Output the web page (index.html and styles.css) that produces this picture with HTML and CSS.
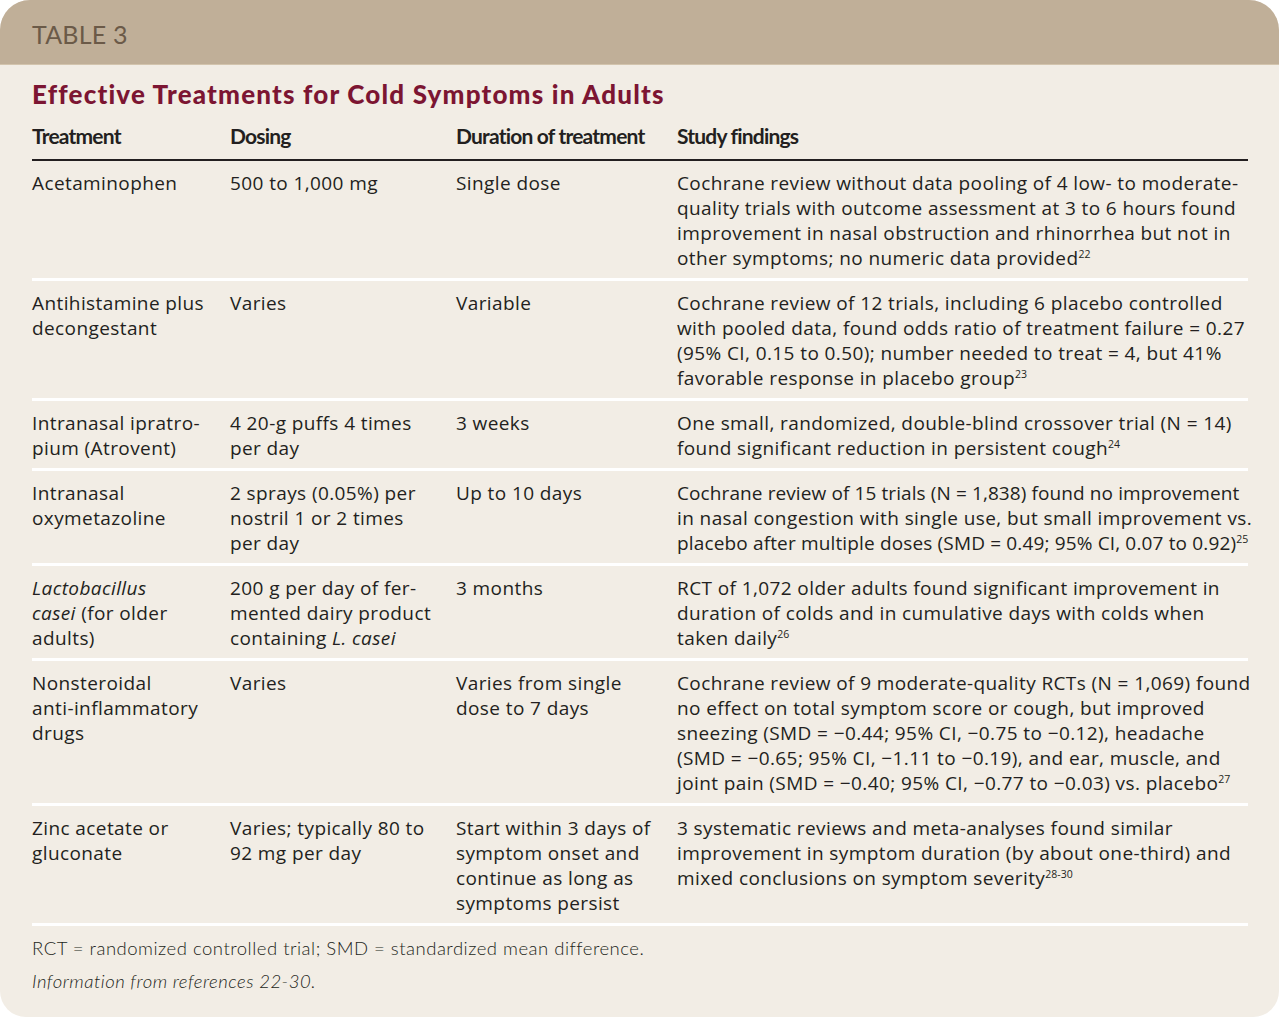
FILE: index.html
```html
<!DOCTYPE html>
<html>
<head>
<meta charset="utf-8">
<link rel="stylesheet" href="styles.css">
</head>
<body>
<div class="card">
  <div class="bar">TABLE 3</div>
  <div class="body">
    <h1 class="title">Effective Treatments for Cold Symptoms in Adults</h1>
    <table class="tbl">
      <colgroup>
        <col class="c1"><col class="c2"><col class="c3"><col class="c4">
      </colgroup>
      <thead>
        <tr><th>Treatment</th><th>Dosing</th><th>Duration of treatment</th><th>Study findings</th></tr>
      </thead>
      <tbody>
        <tr>
          <td>Acetaminophen</td>
          <td>500 to 1,000 mg</td>
          <td>Single dose</td>
          <td>Cochrane review without data pooling of 4 low- to moderate-<br>quality trials with outcome assessment at 3 to 6 hours found<br>improvement in nasal obstruction and rhinorrhea but not in<br>other symptoms; no numeric data provided<sup>22</sup></td>
        </tr>
        <tr>
          <td>Antihistamine plus<br>decongestant</td>
          <td>Varies</td>
          <td>Variable</td>
          <td>Cochrane review of 12 trials, including 6 placebo controlled<br>with pooled data, found odds ratio of treatment failure = 0.27<br>(95% CI, 0.15 to 0.50); number needed to treat = 4, but 41%<br>favorable response in placebo group<sup>23</sup></td>
        </tr>
        <tr>
          <td>Intranasal ipratro-<br>pium (Atrovent)</td>
          <td>4 20-g puffs 4 times<br>per day</td>
          <td>3 weeks</td>
          <td>One small, randomized, double-blind crossover trial (N = 14)<br>found significant reduction in persistent cough<sup>24</sup></td>
        </tr>
        <tr>
          <td>Intranasal<br>oxymetazoline</td>
          <td>2 sprays (0.05%) per<br>nostril 1 or 2 times<br>per day</td>
          <td>Up to 10 days</td>
          <td><span class="tighter">Cochrane review of 15 trials (N = 1,838) found no improvement</span><br>in nasal congestion with single use, but small improvement vs.<br><span class="tight">placebo after multiple doses (SMD = 0.49; 95% CI, 0.07 to 0.92)</span><sup>25</sup></td>
        </tr>
        <tr>
          <td><i>Lactobacillus</i><br><i>casei</i> (for older<br>adults)</td>
          <td>200 g per day of fer-<br>mented dairy product<br>containing <i>L. casei</i></td>
          <td>3 months</td>
          <td>RCT of 1,072 older adults found significant improvement in<br>duration of colds and in cumulative days with colds when<br>taken daily<sup>26</sup></td>
        </tr>
        <tr>
          <td>Nonsteroidal<br>anti-inflammatory<br>drugs</td>
          <td>Varies</td>
          <td>Varies from single<br>dose to 7 days</td>
          <td>Cochrane review of 9 moderate-quality RCTs (N = 1,069) found<br>no effect on total symptom score or cough, but improved<br>sneezing (SMD = &minus;0.44; 95% CI, &minus;0.75 to &minus;0.12), headache<br>(SMD = &minus;0.65; 95% CI, &minus;1.11 to &minus;0.19), and ear, muscle, and<br>joint pain (SMD = &minus;0.40; 95% CI, &minus;0.77 to &minus;0.03) vs. placebo<sup>27</sup></td>
        </tr>
        <tr>
          <td>Zinc acetate or<br>gluconate</td>
          <td>Varies; typically 80 to<br>92 mg per day</td>
          <td>Start within 3 days of<br>symptom onset and<br>continue as long as<br>symptoms persist</td>
          <td>3 systematic reviews and meta-analyses found similar<br>improvement in symptom duration (by about one-third) and<br>mixed conclusions on symptom severity<sup>28-30</sup></td>
        </tr>
      </tbody>
    </table>
    <p class="note">RCT = randomized controlled trial; SMD = standardized mean difference.</p>
    <p class="note src">Information from references 22-30.</p>
  </div>
</div>
</body>
</html>
```

FILE: styles.css
```css
html, body {
  margin: 0;
  padding: 0;
  background: #ffffff;
}
body {
  width: 1280px;
  height: 1018px;
  font-family: "Open Sans", Lato, sans-serif;
  color: #231f20;
}
.card {
  width: 1279px;
  height: 1017px;
  background: #f2ede5;
  border-radius: 30px 30px 26px 26px;
  overflow: hidden;
}
.bar {
  height: 65px;
  background: #c0af98;
  border-bottom: 1px solid #d3c4ad;
  box-sizing: border-box;
  padding: 19px 0 0 32px;
  font-family: Lato, sans-serif;
  font-size: 25px;
  line-height: 30px;
  color: #6b5a48;
  letter-spacing: 0.2px;
}
.body {
  padding: 13px 31px 0 32px;
}
.title {
  margin: 0;
  font-family: Lato, sans-serif;
  font-size: 26px;
  line-height: 32px;
  font-weight: 900;
  color: #7c1532;
  letter-spacing: 1.18px;
}
.tbl {
  width: 1216px;
  table-layout: fixed;
  border-collapse: collapse;
  margin-top: 14px;
}
.c1 { width: 198px; }
.c2 { width: 226px; }
.c3 { width: 221px; }
.c4 { width: 571px; }
.tbl th {
  text-align: left;
  font-family: Lato, sans-serif;
  font-weight: 700;
  font-size: 21px;
  line-height: 24px;
  letter-spacing: -0.8px;
  padding: 0 0 11px 0;
  border-bottom: 2px solid #231f20;
  color: #231f20;
}
.tbl td {
  vertical-align: top;
  white-space: nowrap;
  overflow: visible;
  font-size: 19px;
  line-height: 25px;
  letter-spacing: 0.4px;
  padding: 10px 0 7px 0;
  border-bottom: 3px solid #ffffff;
  color: #231f20;
}
.tight {
  letter-spacing: 0.15px;
}
.tighter {
  letter-spacing: 0.1px;
}
.tbl sup {
  font-size: 10.5px;
  line-height: 0;
  letter-spacing: 0;
  vertical-align: 7px;
}
.note {
  margin: 10px 0 0 0;
  font-family: Lato, sans-serif;
  font-size: 18.5px;
  line-height: 24px;
  font-weight: 300;
  letter-spacing: 0.5px;
  color: #231f20;
}
.note + .note {
  margin-top: 9px;
}
.src {
  font-style: italic;
}
```
